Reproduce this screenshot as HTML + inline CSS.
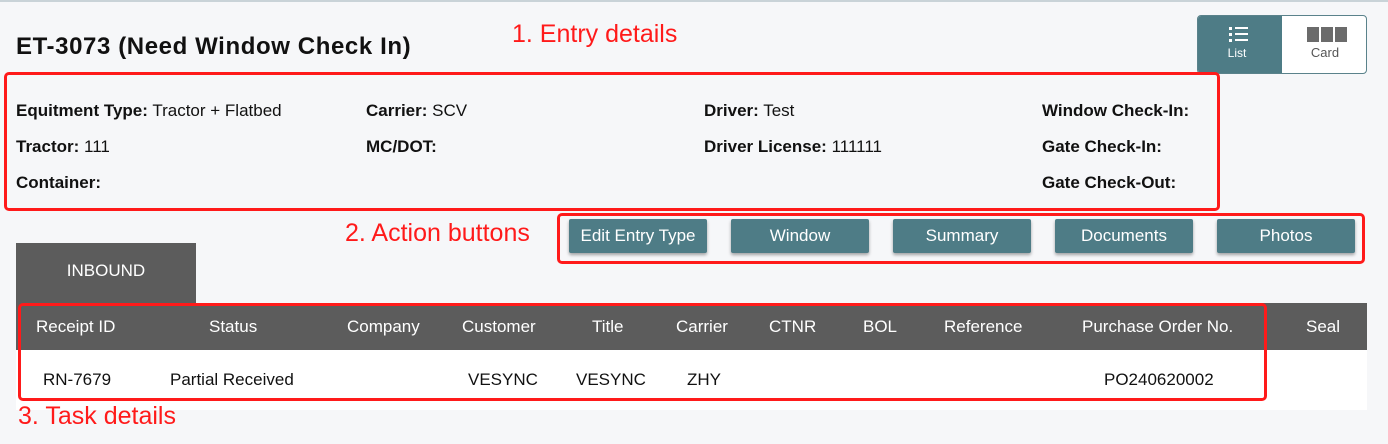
<!DOCTYPE html>
<html><head><meta charset="utf-8"><style>
*{margin:0;padding:0;box-sizing:border-box}
body{width:1388px;height:444px;background:#f6f7f9;font-family:"Liberation Sans",sans-serif;position:relative;overflow:hidden;color:#111}
.a{position:absolute;white-space:nowrap}
.topline{position:absolute;left:0;top:0;width:1388px;height:2px;background:#c9d3d8}
h1{position:absolute;left:16px;top:33px;font-size:24px;font-weight:bold;color:#111;letter-spacing:0.6px}
.red{position:absolute;border:3px solid #ff1a1a;border-radius:5px}
.ann{position:absolute;color:#ff1a1a;font-size:25px;white-space:nowrap}
.f{position:absolute;font-size:17px;white-space:nowrap}
.f b{font-weight:bold}
.btn{position:absolute;top:219px;width:138px;height:34px;background:#4e7c86;color:#fff;font-size:17px;text-align:center;line-height:34px;box-shadow:0 2px 3px rgba(0,0,0,.35);border-radius:2px}
.tab{position:absolute;left:16px;top:243px;width:180px;height:60px;background:#5c5c5c;color:#fff;font-size:17px;text-align:center;line-height:56px}
.thead{position:absolute;left:16px;top:303px;width:1351px;height:47px;background:#5c5c5c}
.tbody{position:absolute;left:16px;top:350px;width:1351px;height:60px;background:#fff}
.th{position:absolute;top:317px;color:#fff;font-size:17px;white-space:nowrap}
.td{position:absolute;top:370px;font-size:17px;white-space:nowrap;color:#111}
.toggle{position:absolute;left:1197px;top:15px;width:170px;height:59px;border:1px solid #5a828b;border-radius:4px;background:#fff;overflow:hidden}
.tl{position:absolute;left:0;top:0;width:84px;height:59px;background:#4e7c86}
</style></head><body>
<div class="topline"></div>
<h1>ET-3073 (Need Window Check In)</h1>
<div class="ann" style="left:512px;top:20px">1. Entry details</div>
<div class="toggle">
 <div class="tl">
  <svg style="position:absolute;left:28px;top:10px" width="24" height="18"><rect x="3" y="1" width="3" height="3" fill="#fff"/><rect x="9" y="1" width="13" height="2" fill="#fff"/><rect x="3" y="7" width="3" height="3" fill="#fff"/><rect x="9" y="7" width="13" height="2" fill="#fff"/><rect x="3" y="13" width="3" height="3" fill="#fff"/><rect x="9" y="13" width="13" height="2" fill="#fff"/></svg>
  <div class="a" style="left:0;width:78px;text-align:center;top:30px;color:#fff;font-size:12px">List</div>
 </div>
 <svg style="position:absolute;left:109px;top:11px" width="42" height="16"><rect x="0" y="0" width="12" height="15" fill="#6b6b6b"/><rect x="14" y="0" width="12" height="15" fill="#6b6b6b"/><rect x="28" y="0" width="12" height="15" fill="#6b6b6b"/></svg>
 <div class="a" style="left:84px;width:86px;text-align:center;top:29px;color:#555;font-size:13px">Card</div>
</div>
<div class="red" style="left:4px;top:72px;width:1216px;height:139px"></div>
<div class="f" style="left:16px;top:101px"><b>Equitment Type:</b> Tractor + Flatbed</div>
<div class="f" style="left:366px;top:101px"><b>Carrier:</b> SCV</div>
<div class="f" style="left:704px;top:101px"><b>Driver:</b> Test</div>
<div class="f" style="left:1042px;top:101px"><b>Window Check-In:</b></div>
<div class="f" style="left:16px;top:137px"><b>Tractor:</b> 111</div>
<div class="f" style="left:366px;top:137px"><b>MC/DOT:</b></div>
<div class="f" style="left:704px;top:137px"><b>Driver License:</b> 111111</div>
<div class="f" style="left:1042px;top:137px"><b>Gate Check-In:</b></div>
<div class="f" style="left:16px;top:173px"><b>Container:</b></div>
<div class="f" style="left:1042px;top:173px"><b>Gate Check-Out:</b></div>
<div class="ann" style="left:345px;top:219px">2. Action buttons</div>
<div class="red" style="left:557px;top:213px;width:808px;height:51px"></div>
<div class="btn" style="left:569px">Edit Entry Type</div>
<div class="btn" style="left:731px">Window</div>
<div class="btn" style="left:893px">Summary</div>
<div class="btn" style="left:1055px">Documents</div>
<div class="btn" style="left:1217px">Photos</div>
<div class="tab">INBOUND</div>
<div class="thead"></div>
<div class="tbody"></div>
<div class="th" style="left:36px">Receipt ID</div>
<div class="th" style="left:209px">Status</div>
<div class="th" style="left:347px">Company</div>
<div class="th" style="left:462px">Customer</div>
<div class="th" style="left:592px">Title</div>
<div class="th" style="left:676px">Carrier</div>
<div class="th" style="left:769px">CTNR</div>
<div class="th" style="left:863px">BOL</div>
<div class="th" style="left:944px">Reference</div>
<div class="th" style="left:1082px">Purchase Order No.</div>
<div class="th" style="left:1306px">Seal</div>
<div class="td" style="left:43px">RN-7679</div>
<div class="td" style="left:170px">Partial Received</div>
<div class="td" style="left:468px">VESYNC</div>
<div class="td" style="left:576px">VESYNC</div>
<div class="td" style="left:687px">ZHY</div>
<div class="td" style="left:1104px">PO240620002</div>
<div class="red" style="left:18px;top:303px;width:1249px;height:98px"></div>
<div class="ann" style="left:18px;top:402px">3. Task details</div>
</body></html>
